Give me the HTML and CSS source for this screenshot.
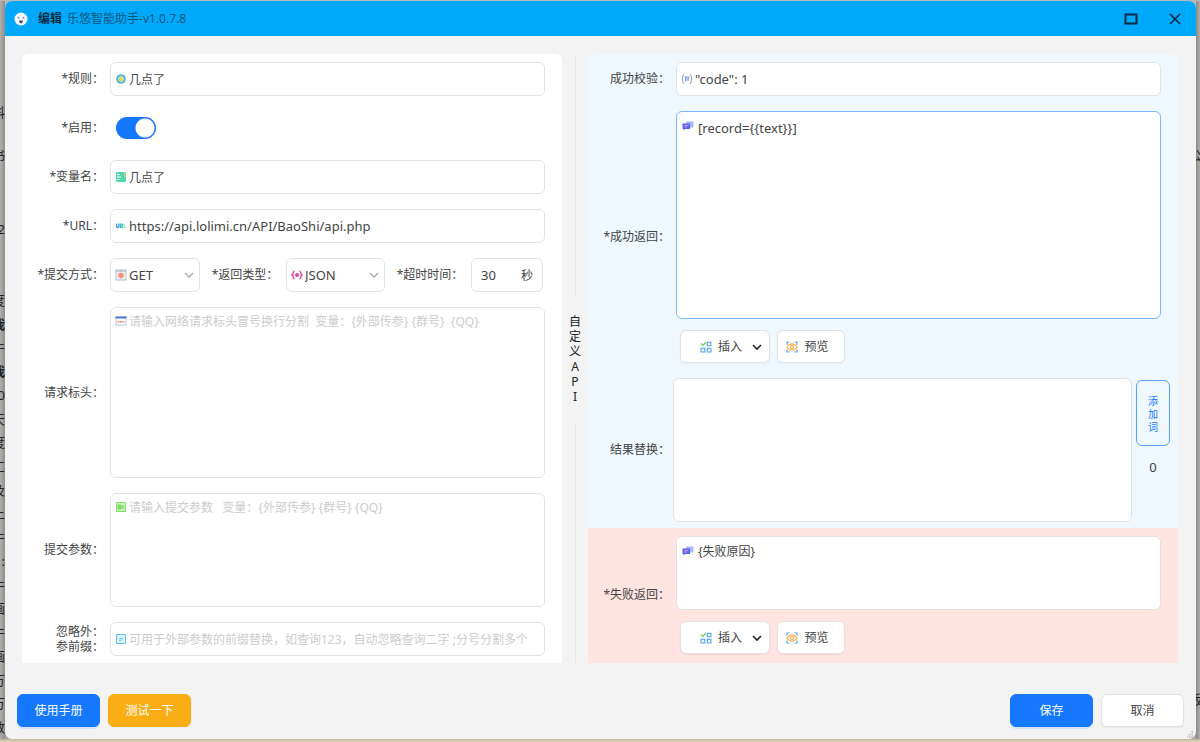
FILE: index.html
```html
<!DOCTYPE html>
<html lang="zh-CN">
<head>
<meta charset="utf-8">
<title>编辑 乐悠智能助手-v1.0.7.8</title>
<link rel="stylesheet" href="styles.css">
</head>
<body>
<svg class="defs" aria-hidden="true">
  <symbol id="chev" viewBox="0 0 12 12"><path d="M2 4l4 4 4-4" fill="none" stroke="currentColor" stroke-width="1.6"/></symbol>
  <symbol id="insert" viewBox="0 0 12 12"><path d="M1 2.5l2 2 3-3.5" fill="none" stroke="#7ccf5c" stroke-width="1.3"/><path d="M7.3 1.2h3.6v3.6H7.3zM1 7.2h3.8v3.8H1zM7.3 7.2h3.6v3.8H7.3z" fill="none" stroke="#4a9ff5" stroke-width="1.1"/></symbol>
  <symbol id="preview" viewBox="0 0 12 12"><path d="M1 3.5V1h2.5M8.500 1H11v2.500M11 8.500V11H8.500M3.500 11H1V8.500" fill="none" stroke="#5aa9e6" stroke-width="1.200"/><path d="M1 6c1.300-2.200 3-3.200 5-3.200S9.700 3.800 11 6c-1.300 2.200-3 3.200-5 3.200S2.300 8.200 1 6z" fill="#fff" stroke="#f9b45c" stroke-width="1.200"/><circle cx="6" cy="6" r="1.600" fill="none" stroke="#f9b45c" stroke-width="1.200"/></symbol>
  <symbol id="chat" viewBox="0 0 12 12"><path d="M4 1.500h7.500v6H4z" fill="#a9baff"/><path d="M.5 3.500H8v5.500H3l-1.500 1.500V9h-1z" fill="#5a63f5"/><path d="M2.500 5.500h4M2.500 7h2.500" stroke="#e59af0" stroke-width=".9"/></symbol>
</svg>
<div class="desktop">
  <div class="edge edge-left" aria-hidden="true">
    <span class="scrap scrap-a">料</span><span class="scrap scrap-b">书</span><span class="scrap scrap-c">2</span>
    <div class="scraps"><span>度</span><b>我</b><span>牛</span><b>我</b><span>0</span><span>天</span><span>度</span><span>工</span><span>及</span><span>上</span><span>牛</span><span>:</span><span>牛</span><span>画</span><span>牛</span><span>画</span><span>万</span><span>万</span><span>数</span></div>
  </div>
  <main class="window">
    <header class="titlebar">
      <svg class="logo" viewBox="0 0 14 14" aria-hidden="true"><circle cx="7" cy="7" r="6.500" fill="#f4f8ff"/><circle cx="4.500" cy="5.800" r="1" fill="#8295b5"/><circle cx="9.500" cy="5.800" r="1" fill="#8295b5"/><path d="M5.200 8.500h3.600c0 2-.8 2.800-1.800 2.800s-1.800-.8-1.800-2.800z" fill="#39496b"/></svg>
      <h1 class="title">编辑</h1><span class="subtitle">乐悠智能助手-v1.0.7.8</span>
      <button class="win-btn" type="button" aria-label="最大化"><svg viewBox="0 0 14 14"><path d="M1.500 2.500h11v9h-11z" fill="none" stroke="currentColor" stroke-width="2"/></svg></button>
      <button class="win-btn" type="button" aria-label="关闭"><svg viewBox="0 0 14 14"><path d="M2 2l10 10M12 2L2 12" fill="none" stroke="currentColor" stroke-width="1.700"/></svg></button>
    </header>
    <div class="body">
      <section class="panel request">
        <label class="label" for="rule">*规则：</label>
        <div class="field"><svg class="icon" viewBox="0 0 12 12"><circle cx="6" cy="6" r="4.800" fill="#4eb1e4"/><circle cx="6" cy="6" r="3" fill="#a5dfc8"/><path d="M4.500 3.500h2l1.500 1.500v3.500H4.500z" fill="#f3dc4b"/></svg><input id="rule" value="几点了"></div>

        <label class="label" for="enabled">*启用：</label>
        <div class="switch-row"><input class="switch" id="enabled" type="checkbox" role="switch" checked></div>

        <label class="label" for="name">*变量名：</label>
        <div class="field"><svg class="icon" viewBox="0 0 12 12"><rect x="1" y="1" width="10" height="10" rx="1.500" fill="#4fd8ac"/><path d="M2 3.500h3M2 6h4M2 8.500h3" stroke="#fff"/><path d="M9.800 2v4" stroke="#f5d25a" stroke-width="1.300"/></svg><input id="name" value="几点了"></div>

        <label class="label" for="url">*URL：</label>
        <div class="field"><svg class="icon" viewBox="0 0 12 12"><path d="M1.600 3.500v2.700q0 1.300 1.200 1.300t1.200-1.300V3.500" fill="none" stroke="#3a8df0" stroke-width="1.300"/><path d="M5.600 8V4h1.200q1 0 1 1t-1 1h-.8l1.800 2" fill="none" stroke="#30c4c4" stroke-width="1.200"/><path d="M9.200 3.500v4h1.800" fill="none" stroke="#a6dfaf" stroke-width="1.100"/></svg><input id="url" value="https://api.lolimi.cn/API/BaoShi/api.php"></div>

        <label class="label" for="method">*提交方式：</label>
        <div class="inline">
          <div class="field method"><svg class="icon" viewBox="0 0 12 12"><rect x="1" y="1" width="10" height="10" fill="#edf0f4" stroke="#b9c2cc"/><path d="M1 2h10" stroke="#b9c2cc" stroke-width="1.500"/><circle cx="6" cy="6.500" r="2.800" fill="#fa8f80"/></svg><select id="method"><option>GET</option><option>POST</option></select><svg class="caret"><use href="#chev"/></svg></div>
          <label class="label" for="type">*返回类型：</label>
          <div class="field type"><svg class="icon" viewBox="0 0 12 12"><path d="M3.500 2C2 2 2.500 5.500 1 6c1.500.5 1 4 2.500 4M8.500 2C10 2 9.500 5.500 11 6c-1.500.5-1 4-2.500 4" fill="none" stroke="#e0459a" stroke-width="1.500"/><circle cx="6" cy="6" r="2" fill="#e0459a"/></svg><select id="type"><option>JSON</option><option>TEXT</option></select><svg class="caret"><use href="#chev"/></svg></div>
          <label class="label" for="timeout">*超时时间：</label>
          <div class="field timeout"><input id="timeout" value="30"><span>秒</span></div>
        </div>

        <label class="label" for="headers">请求标头：</label>
        <div class="field area"><svg class="icon" viewBox="0 0 12 12"><rect x="1" y="2" width="10" height="8" fill="#fff" stroke="#b9c5dc"/><path d="M.5 2.500h11" stroke="#4b78dc" stroke-width="2"/><path d="M2.500 6.800h7" stroke="#f2837c" stroke-width="1.500" stroke-dasharray="2 .5"/></svg><textarea id="headers" placeholder="请输入网络请求标头冒号换行分割&nbsp; 变量：{外部传参} {群号}&nbsp; {QQ}"></textarea></div>

        <label class="label" for="params">提交参数：</label>
        <div class="field area"><svg class="icon" viewBox="0 0 12 12"><rect x="1.500" y="1.500" width="9" height="9" fill="#c9f5bb" stroke="#83df6c"/><path d="M3 4h3v4H3zM6 6h3M8 4v4" fill="#83df6c" stroke="#7fdc68"/></svg><textarea id="params" placeholder="请输入提交参数&nbsp;&nbsp; 变量：{外部传参} {群号} {QQ}"></textarea></div>

        <label class="label" for="prefix">忽略外：<br>参前缀：</label>
        <div class="field"><svg class="icon" viewBox="0 0 12 12"><rect x="1.500" y="1.500" width="9" height="9" rx="1" fill="#e5f6ff" stroke="#5fc2f5" stroke-width="1.200"/><path d="M4 5.500h2.500l1.500-1M4 8l3.500-1.500" stroke="#5fc2f5" fill="none"/></svg><input id="prefix" placeholder="可用于外部参数的前缀替换，如查询123，自动忽略查询二字 ;分号分割多个"></div>
      </section>

      <div class="divider"><span>自<br>定<br>义<br>A<br>P<br>I</span></div>

      <div class="results">
        <section class="panel success">
          <label class="label" for="check">成功校验：</label>
          <div class="field"><svg class="icon" viewBox="0 0 12 12"><path d="M3 1.500C1 1.500 2.500 5 1 6c1.500 1 0 4.500 2 4.500M9 1.500c2 0 .5 3.500 2 4.500-1.500 1 0 4.500-2 4.500" fill="none" stroke="#8b94a8"/><path d="M3.500 4h2.500M4.700 4v4.500M7 8V4h1.500" fill="none" stroke="#668cf5" stroke-width="1.200"/></svg><input id="check" value="&quot;code&quot;: 1"></div>

          <label class="label" for="ok">*成功返回：</label>
          <div class="stack">
            <div class="field area focused"><svg class="icon"><use href="#chat"/></svg><textarea id="ok">[record={{text}}]</textarea></div>
            <div class="actions"><button class="btn insert" type="button"><svg class="icon"><use href="#insert"/></svg>插入<svg class="caret"><use href="#chev"/></svg></button><button class="btn preview" type="button"><svg class="icon"><use href="#preview"/></svg>预览</button></div>
          </div>

          <label class="label" for="replace">结果替换：</label>
          <div class="replace">
            <textarea class="field" id="replace"></textarea>
            <div class="replace-side"><button class="add" type="button">添<br>加<br>词</button><span>0</span></div>
          </div>
        </section>
        <section class="panel failure">
          <label class="label" for="fail">*失败返回：</label>
          <div class="stack">
            <div class="field area"><svg class="icon"><use href="#chat"/></svg><textarea id="fail">{失败原因}</textarea></div>
            <div class="actions"><button class="btn insert" type="button"><svg class="icon"><use href="#insert"/></svg>插入<svg class="caret"><use href="#chev"/></svg></button><button class="btn preview" type="button"><svg class="icon"><use href="#preview"/></svg>预览</button></div>
          </div>
        </section>
      </div>
    </div>
    <footer class="footer">
      <button class="btn primary" type="button">使用手册</button>
      <button class="btn warning" type="button">测试一下</button>
      <button class="btn primary push" type="button">保存</button>
      <button class="btn" type="button">取消</button>
    </footer>
    <svg class="grip" viewBox="0 0 8 8" aria-hidden="true"><path d="M5 0h2v2H5zM5 3h2v2H5zM2 3h2v2H2zM5 6h2v2H5zM2 6h2v2H2zM-1 6h2v2h-2z" fill="#c0c0c0"/></svg>
  </main>
  <div class="edge edge-right" aria-hidden="true"><span class="scrap scrap-b">公</span><span class="scrap scrap-d">版</span></div>
</div>
</body>
</html>
```
FILE: styles.css
```css
* { box-sizing: border-box; }

body {
  margin: 0;
  font: 12px/15px "Noto Sans", "Noto Sans CJK SC", sans-serif;
  color: #444;
}

button, input, select, textarea {
  font: inherit;
  color: inherit;
}

.defs { position: absolute; width: 0; height: 0; }

.desktop {
  display: grid;
  grid-template-columns: 5px minmax(0, 1fr) 4px;
  min-height: 100vh;
  padding: 1px 0 3px;
  background: linear-gradient(#b9b9b9, #9d9b99 98%, #807b74 99%, #e6d5bd 100%);
}

/* Strips of the application behind the dialog */
.edge {
  position: relative;
  overflow: hidden;
  font-size: 13px;
  color: #222;
}
.edge-left { background: linear-gradient(to right, #b2afaa, #8f8d8a); }
.edge-right { background: linear-gradient(to right, #8a8886, #b2afaa); }
.scrap { position: absolute; right: 0; }
.edge-right .scrap { right: auto; left: -7px; }
.scrap-a { top: 104px; }
.scrap-b { top: 147px; }
.scrap-c { top: 221px; }
.scrap-d { top: 691px; }
.scraps {
  position: absolute;
  top: 292px;
  bottom: 4px;
  right: 0;
  display: flex;
  flex-direction: column;
  justify-content: space-between;
  align-items: flex-end;
}

.window {
  position: relative;
  display: flex;
  flex-direction: column;
  overflow: hidden;
  background: #f3f3f3;
  border-radius: 7px;
}

.titlebar {
  display: flex;
  align-items: center;
  height: 35px;
  padding: 0 14px 0 9px;
  background: #00a9fb;
  color: #062b43;
}
.logo { width: 14px; height: 14px; margin-right: 10px; }
.title { margin: 0 5px 0 0; font-size: 12px; font-weight: 700; }
.subtitle { flex: 1; color: #08567f; }
.win-btn {
  display: flex;
  width: 14px;
  height: 14px;
  margin-left: 30px;
  padding: 0;
  border: 0;
  background: none;
}
.win-btn svg { width: 14px; height: 14px; }

.body {
  flex: 1;
  display: grid;
  grid-template-columns: 540fr 26px 590fr;
  padding: 18px 18px 0 17px;
}

.panel {
  display: grid;
  column-gap: 6px;
  row-gap: 15px;
  align-items: stretch;
}
.label {
  align-self: center;
  padding-bottom: 1px;
  text-align: right;
  white-space: nowrap;
}

.request {
  grid-template-columns: 76px minmax(0, 1fr);
  grid-template-rows: repeat(5, 34px) 3fr 2fr 34px;
  padding: 8px 17px 7px 6px;
  background: #fff;
  border-radius: 6px 6px 0 0;
}

.field {
  display: flex;
  align-items: center;
  gap: 2px;
  min-width: 0;
  padding: 0 4px;
  background: #fff;
  border: 1px solid #e2e2e2;
  border-radius: 6px;
}
.field input, .field select, .field textarea {
  flex: 1;
  min-width: 0;
  padding: 0;
  border: 0;
  outline: 0;
  background: transparent;
}
.field input { height: 24px; }
.field select { appearance: none; }
.field textarea { align-self: stretch; resize: none; }
.field ::placeholder { color: #ccc; }
.icon { flex: none; width: 12px; height: 12px; }
.area {
  align-items: flex-start;
  padding-top: 6px;
}
.area .icon { margin-top: 1px; }
.stack .area { gap: 4px; padding: 7px 5px 0; }
.focused { border-color: #7bb4ff; }
.caret { flex: none; width: 12px; height: 12px; color: #b5b5b5; }

#url, #method, #type, #timeout, #check, #ok { font-size: 13px; }
#ok { line-height: 18px; }

.switch-row { display: flex; align-items: center; padding-left: 6px; }
.switch {
  appearance: none;
  width: 40px;
  height: 22px;
  margin: 0;
  border-radius: 11px;
  background: radial-gradient(circle at 29px 11px, #fff 9px, #1677ff 10px);
}

.inline { display: flex; justify-content: space-between; padding-right: 2px; }
.inline .label { padding-left: 4px; }
.method { width: 90px; }
.type { width: 99px; }
.timeout { width: 72px; padding: 0 9px; }

.divider {
  display: flex;
  flex-direction: column;
  align-items: center;
  gap: 18px;
  text-align: center;
  color: #222;
}
.divider::before, .divider::after {
  content: "";
  flex: 1;
  width: 1px;
  background: #e8e8e8;
}

.results { display: flex; flex-direction: column; min-width: 0; }
.success, .failure {
  grid-template-columns: 82px minmax(0, 1fr);
  padding: 8px 17px 6px 0;
}
.success {
  flex: 1;
  grid-template-rows: 34px 253fr 144fr;
  background: #eff7ff;
  border-radius: 6px 6px 0 0;
}
.failure {
  padding-bottom: 9px;
  background: #ffe4e1;
}
.stack { display: flex; flex-direction: column; gap: 11px; }
.stack .area { flex: 1; min-height: 74px; }
.actions { display: flex; gap: 7px; padding-left: 4px; }

.btn {
  display: flex;
  align-items: center;
  justify-content: center;
  gap: 6px;
  height: 33px;
  min-width: 83px;
  padding: 0;
  background: #fff;
  border: 1px solid #e2e2e2;
  border-radius: 6px;
  box-shadow: 0 1px 2px #0000000d;
}
.insert { min-width: 90px; padding-left: 13px; }
.insert .caret { color: #222; margin-left: 3px; }
.preview { min-width: 68px; padding-right: 7px; }
.primary { background: #1677ff; border-color: #1677ff; color: #fff; box-shadow: 0 2px 1px #1677ff22; }
.warning { background: #faad14; border-color: #faad14; color: #fff; }

.replace {
  display: flex;
  gap: 4px;
  margin: 0 -9px 0 -3px;
}
.replace > .field { flex: 1; resize: none; outline: 0; }
.replace-side {
  display: flex;
  flex-direction: column;
  align-items: center;
  gap: 14px;
  padding-top: 2px;
  font-size: 13px;
}
.add {
  width: 34px;
  height: 66px;
  padding: 2px 0 0;
  font-size: 10px;
  line-height: 13px;
  color: #1677ff;
  background: transparent;
  border: 1px solid #5aa0ff;
  border-radius: 6px;
}

.footer {
  display: flex;
  gap: 8px;
  padding: 31px 12px 12px;
}
.push { margin-left: auto; }
.grip { position: absolute; right: 2px; bottom: 1px; width: 7px; height: 7px; }
```
